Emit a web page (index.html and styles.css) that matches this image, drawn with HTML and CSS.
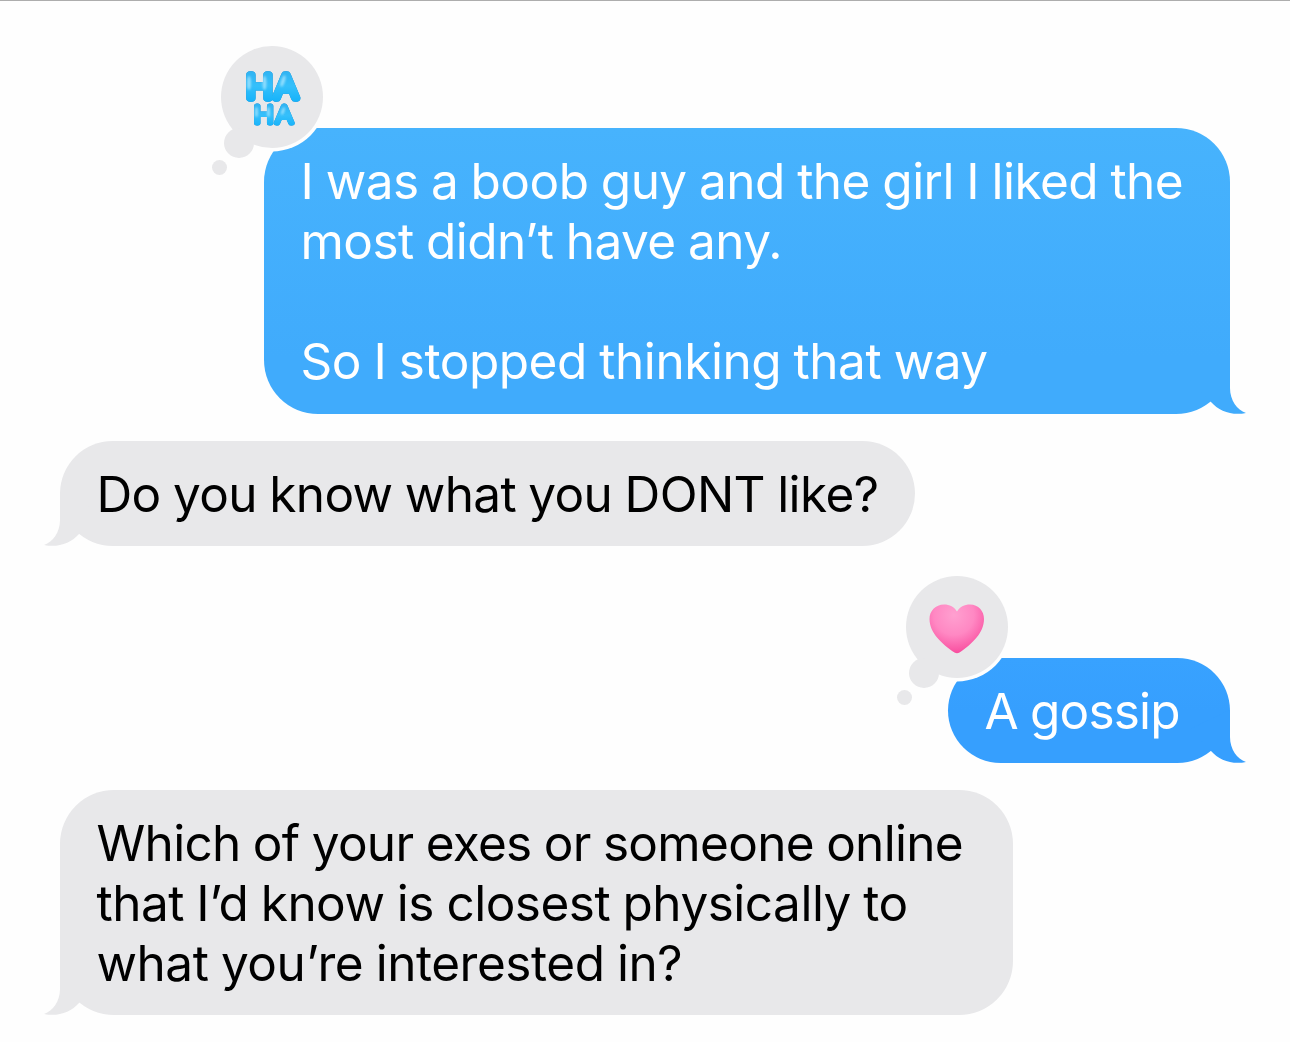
FILE: index.html
```
<!DOCTYPE html>
<html lang="en">
<head>
  <meta charset="UTF-8">
  <title>Messages</title>
  <link rel="stylesheet" href="styles.css">
</head>
<body>
<div class="chat">

  <div class="message sent first">
    <span class="line l1">I was a boob guy and the girl I liked the</span>
    <span class="line l2">most didn’t have any.</span>
    <span class="line blank"></span>
    <span class="line l3">So I stopped thinking that way</span>
    <svg class="tail" viewBox="0 0 56 64"><path d="M40 10V38C40 50 47 60 56 63C42 66 29 61 21 52L0 30z"/></svg>
    <svg class="reaction" viewBox="0 0 115 135">
      <defs>
        <linearGradient id="haha" x1="0" y1="0" x2="0" y2="1">
          <stop offset="0" stop-color="#2fb0f0"/>
          <stop offset=".5" stop-color="#35c0fb"/>
          <stop offset="1" stop-color="#10b0fa"/>
        </linearGradient>
      </defs>
      <circle class="ring" cx="60" cy="54" r="54.5"/>
      <circle cx="60" cy="54" r="51"/>
      <circle cx="27" cy="100" r="15"/>
      <circle cx="7.5" cy="124.5" r="7.5"/>
      <g class="haha">
        <text class="big" x="34.500" y="54.5" textLength="53" lengthAdjust="spacingAndGlyphs">HA</text>
        <text class="small" x="42" y="80.2" textLength="41" lengthAdjust="spacingAndGlyphs">HA</text>
      </g>
      <g class="shine">
        <ellipse cx="37" cy="40" rx="2" ry="7"/>
        <ellipse cx="52.5" cy="40" rx="2" ry="7"/>
        <ellipse cx="71" cy="38" rx="2" ry="6" transform="rotate(18 71 38)"/>
        <ellipse cx="44.5" cy="69" rx="1.5" ry="5"/>
        <ellipse cx="56.5" cy="69" rx="1.5" ry="5"/>
        <ellipse cx="71" cy="68" rx="1.5" ry="4" transform="rotate(18 71 68)"/>
      </g>
    </svg>
  </div>

  <div class="message received second">
    <span class="line l4">Do you know what you DONT like?</span>
    <svg class="tail" viewBox="0 0 56 64"><path d="M40 11V38C40 50 47 60 56 63C42 66 29 61 21 52L0 30z"/></svg>
  </div>

  <div class="message sent third">
    <span class="line l5">A gossip</span>
    <svg class="tail" viewBox="0 0 56 64"><path d="M40 11V38C40 50 47 60 56 63C42 66 29 61 21 52L0 30z"/></svg>
    <svg class="reaction" viewBox="0 0 115 135">
      <defs>
        <radialGradient id="heart" gradientUnits="userSpaceOnUse" cx="57" cy="42" r="40">
          <stop offset="0" stop-color="#ffa0d0"/>
          <stop offset=".5" stop-color="#ff88c3"/>
          <stop offset="1" stop-color="#f8489b"/>
        </radialGradient>
      </defs>
      <circle class="ring" cx="60" cy="54" r="54.5"/>
      <circle cx="60" cy="54" r="51"/>
      <circle cx="27" cy="100" r="15"/>
      <circle cx="7.5" cy="124.5" r="7.5"/>
      <path class="heart" d="M60 38.5C62.500 34 67.500 31.500 73 31.500C81.500 31.500 87 38 87 46C87 60 75 71 62.500 79.500Q60 81 57.500 79.500C45 71 32.500 60 32.500 46C32.500 38 38.500 31.500 47 31.500C52.500 31.500 57.500 34 60 38.5z"/>
    </svg>
  </div>

  <div class="message received fourth">
    <span class="line l6">Which of your exes or someone online</span>
    <span class="line l7">that I’d know is closest physically to</span>
    <span class="line l8">what you’re interested in?</span>
    <svg class="tail" viewBox="0 0 56 64"><path d="M40 10V38C40 50 47 60 56 63C42 66 29 61 21 52L0 30z"/></svg>
  </div>

</div>
</body>
</html>
```
FILE: styles.css
```
* {
  box-sizing: border-box;
}

body {
  margin: 0;
  background-color: #fefefe;
  font-family: Inter, "Liberation Sans", sans-serif;
}

.chat {
  display: flex;
  flex-direction: column;
  height: 1042px;
  padding: 127px 60px 0;
  border-top: 1px solid #adadad;
  overflow: hidden;
}

.message {
  position: relative;
  flex: none;
  padding: 23px 36.5px 22px;
  border-radius: 54px;
  font-size: 49.5px;
  line-height: 60px;
  word-spacing: -1px;
}

.line {
  display: block;
  height: 60px;
  white-space: nowrap;
}

.l1 {
  letter-spacing: -0.53px;
}

.l2 {
  letter-spacing: -0.55px;
}

.l3 {
  letter-spacing: -0.46px;
}

.l4 {
  letter-spacing: -0.62px;
}

.l5 {
  letter-spacing: -0.8px;
}

.l6 {
  letter-spacing: -0.69px;
}

.l7 {
  letter-spacing: -0.5px;
}

.l8 {
  letter-spacing: -0.46px;
}

.sent {
  align-self: flex-end;
  color: #fff;
}

.received {
  align-self: flex-start;
  background-color: #e8e8ea;
  color: #000;
}

.first {
  width: 966px;
  height: 286px;
  background: linear-gradient(#47b3fd, #40abfc 80%);
}

.second {
  width: 855px;
  height: 105px;
  margin-top: 27px;
  border-radius: 52.5px;
}

.third {
  width: 282px;
  height: 105px;
  margin-top: 112px;
  border-radius: 52.5px;
  background: linear-gradient(#38a2ff, #369ffe 50%);
}

.fourth {
  width: 953px;
  height: 225px;
  margin-top: 27px;
}

/* bubble tails */
.tail {
  position: absolute;
  right: -16px;
  bottom: 0;
  width: 56px;
  height: 64px;
  fill: #e8e8ea;
}

.first .tail {
  fill: #40abfc;
}

.third .tail {
  fill: #369ffe;
}

.received .tail {
  right: auto;
  left: -16px;
  transform: scaleX(-1);
}

/* tapback bubbles */
.reaction {
  position: absolute;
  top: -85px;
  left: -52px;
  width: 115px;
  height: 135px;
  fill: #e8e8ea;
  overflow: visible;
}

.third .reaction {
  left: -51px;
}

.ring {
  fill: #fefefe;
}

.heart {
  fill: url(#heart);
}

.haha {
  fill: url(#haha);
  stroke: url(#haha);
  stroke-linejoin: round;
  font-weight: 100;
  letter-spacing: 2px;
  filter: drop-shadow(0 0 .4px #0c84cc);
}

.big {
  font-size: 31px;
  stroke-width: 7.5px;
}

.small {
  font-size: 23px;
  stroke-width: 5px;
}

.shine {
  fill: #b5ebff;
  opacity: .7;
  filter: blur(1px);
}
```
